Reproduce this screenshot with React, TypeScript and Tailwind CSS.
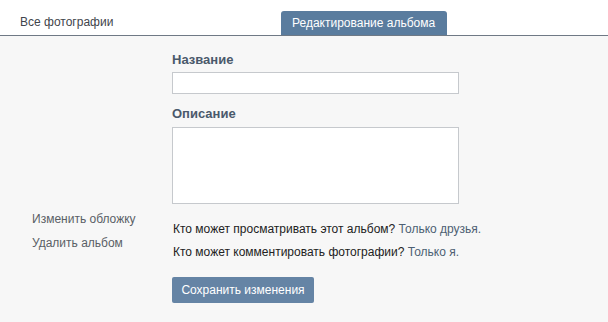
import React from 'react';

const AlbumEdit: React.FC = () => {
  return (
    <div className="w-[608px] h-[322px] bg-[#f7f7f7] font-['Liberation_Sans',Arial,sans-serif] text-[12px] leading-[15px] text-[#222]">
      <div className="h-[36px] bg-white border-b border-[#6f7985] flex items-end">
        <div className="pl-[20px] w-[281px] pb-[5px] text-[#3f454c]">Все фотографии</div>
        <div className="w-[166px] h-[24px] bg-[#5a7c9e] rounded-t-[3px] text-white leading-[24px] pl-[11px]">
          Редактирование альбома
        </div>
      </div>

      <div className="flex">
        <div className="w-[172px] pl-[32px] pt-[176px] text-[#5a5f66]">
          <div className="h-[24px]">Изменить обложку</div>
          <div>Удалить альбом</div>
        </div>

        <div className="w-[287px] pt-[16px] flex flex-col">
          <label className="text-[13px] leading-[16px] font-bold text-[#4a596b]">Название</label>
          <input
            type="text"
            className="mt-[4px] h-[22px] w-full bg-white border border-[#c6c9cd] outline-none px-1"
          />
          <label className="mt-[12px] text-[13px] leading-[16px] font-bold text-[#4a596b]">Описание</label>
          <textarea className="mt-[5px] h-[77px] w-full bg-white border border-[#c6c9cd] outline-none resize-none p-1" />

          <div className="mt-[18px] pl-[1px] whitespace-nowrap">
            Кто может просматривать этот альбом? <span className="text-[#4d5f73]">Только друзья.</span>
          </div>
          <div className="mt-[8px] pl-[1px] whitespace-nowrap">
            Кто может комментировать фотографии? <span className="text-[#4d5f73]">Только я.</span>
          </div>

          <button
            type="button"
            className="mt-[17px] w-[142px] h-[26px] bg-[#6584a5] rounded-[2px] text-white text-[12px] leading-[26px] text-center"
          >
            Сохранить изменения
          </button>
        </div>
      </div>
    </div>
  );
};

export default function App() {
  return <AlbumEdit />;
}
